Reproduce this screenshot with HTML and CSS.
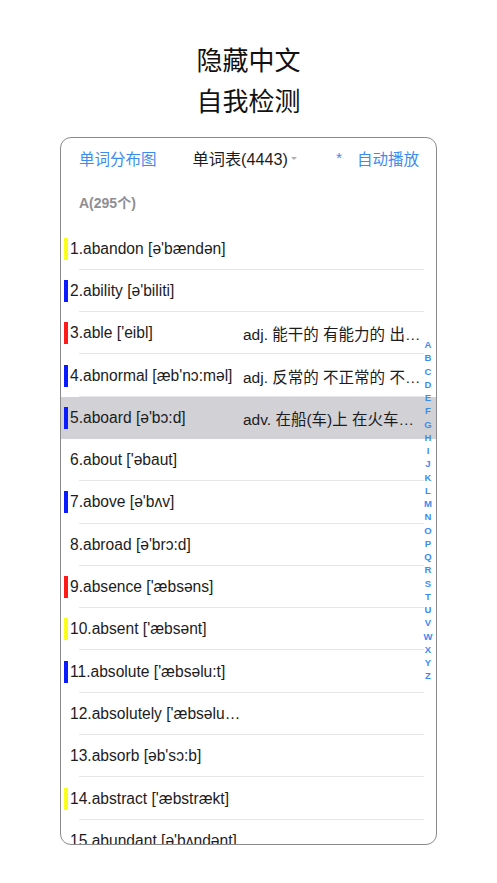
FILE: index.html
```html
<!DOCTYPE html>
<html lang="zh">
<head>
<meta charset="utf-8">
<link rel="stylesheet" href="styles.css">
</head>
<body>
<div class="title">
  <div>隐藏中文</div>
  <div>自我检测</div>
</div>
<div class="frame">
  <div class="topbar">
    <span class="link">单词分布图</span>
    <span class="middle">单词表(4443)<span class="caret"></span></span>
    <span class="right"><span class="star">*</span><span class="link">自动播放</span></span>
  </div>
  <div class="section">A(295个)</div>
  <div class="list">
    <div class="row"><span class="bar yellow"></span><span class="word">1.abandon [ə'bændən]</span><span class="def"></span></div>
    <div class="row"><span class="bar blue"></span><span class="word">2.ability [ə'biliti]</span><span class="def"></span></div>
    <div class="row"><span class="bar red"></span><span class="word">3.able ['eibl]</span><span class="def">adj. 能干的 有能力的 出色的</span></div>
    <div class="row"><span class="bar blue"></span><span class="word">4.abnormal [æb'nɔ:məl]</span><span class="def">adj. 反常的 不正常的 不规则的</span></div>
    <div class="row selected"><span class="bar blue"></span><span class="word">5.aboard [ə'bɔ:d]</span><span class="def">adv. 在船(车)上 在火车上 在飞机上</span></div>
    <div class="row"><span class="bar"></span><span class="word">6.about ['əbaut]</span><span class="def"></span></div>
    <div class="row"><span class="bar blue"></span><span class="word">7.above [ə'bʌv]</span><span class="def"></span></div>
    <div class="row"><span class="bar"></span><span class="word">8.abroad [ə'brɔ:d]</span><span class="def"></span></div>
    <div class="row"><span class="bar red"></span><span class="word">9.absence ['æbsəns]</span><span class="def"></span></div>
    <div class="row"><span class="bar yellow"></span><span class="word">10.absent ['æbsənt]</span><span class="def"></span></div>
    <div class="row"><span class="bar blue"></span><span class="word">11.absolute ['æbsəlu:t]</span><span class="def"></span></div>
    <div class="row"><span class="bar"></span><span class="word">12.absolutely ['æbsəlu:tli]</span><span class="def"></span></div>
    <div class="row"><span class="bar"></span><span class="word">13.absorb [əb'sɔ:b]</span><span class="def"></span></div>
    <div class="row"><span class="bar yellow"></span><span class="word">14.abstract ['æbstrækt]</span><span class="def"></span></div>
    <div class="row"><span class="bar"></span><span class="word">15.abundant [ə'bʌndənt]</span><span class="def"></span></div>
  </div>
  <div class="index">
    <span>A</span><span>B</span><span>C</span><span>D</span><span>E</span><span>F</span><span>G</span><span>H</span><span>I</span><span>J</span><span>K</span><span>L</span><span>M</span><span>N</span><span>O</span><span>P</span><span>Q</span><span>R</span><span>S</span><span>T</span><span>U</span><span>V</span><span>W</span><span>X</span><span>Y</span><span>Z</span>
  </div>
</div>
</body>
</html>
```

FILE: styles.css
```css
html, body {
  margin: 0;
  padding: 0;
  background: #ffffff;
}
body {
  font-family: "Liberation Sans", "Noto Sans CJK SC", sans-serif;
  color: #1c1c1e;
  width: 497px;
}
.title {
  padding-top: 38px;
  text-align: center;
  font-family: "Noto Sans CJK SC", sans-serif;
  font-size: 26px;
  line-height: 41px;
  color: #111;
}
.frame {
  position: relative;
  margin: 17px 0 0 60px;
  width: 375px;
  height: 706px;
  border: 1px solid #8a8a8a;
  border-radius: 11px;
  overflow: hidden;
  background: #fff;
}
.topbar {
  height: 40px;
  display: flex;
  align-items: center;
  padding: 0 17px 0 18px;
  font-size: 15.5px;
}
.link {
  color: #3c8cf0;
}
.middle {
  margin-left: 36px;
  color: #1c1c1e;
  font-size: 16.2px;
  display: flex;
  align-items: center;
}
.caret {
  width: 0;
  height: 0;
  margin-left: 3px;
  border-left: 3px solid transparent;
  border-right: 3px solid transparent;
  border-top: 3px solid #b0b0b0;
}
.right {
  margin-left: auto;
  display: flex;
  align-items: center;
}
.star {
  color: #3c8cf0;
  margin-right: 15px;
}
.section {
  height: 50px;
  line-height: 50px;
  padding-left: 18px;
  font-size: 14px;
  font-weight: bold;
  color: #8e8e93;
}
.list {
  display: flex;
  flex-direction: column;
  margin-top: -0.5px;
}
.row {
  position: relative;
  height: 42.3px;
  display: flex;
  align-items: center;
  font-size: 15.6px;
}
.row::after {
  content: "";
  position: absolute;
  left: 18px;
  right: 12px;
  bottom: 0;
  height: 1px;
  background: #e6e6e8;
}
.row.selected {
  background: #d1d1d6;
}
.row.selected::after {
  display: none;
}
.bar {
  width: 4px;
  height: 22px;
  margin-left: 3px;
  margin-right: 2px;
  flex: none;
}
.bar.yellow { background: #fbff1e; }
.bar.blue { background: #0a1cff; }
.bar.red { background: #ff1a1a; }
.word {
  width: 172px;
  flex: none;
  white-space: nowrap;
  overflow: hidden;
  text-overflow: ellipsis;
}
.def {
  margin-left: 1px;
  width: 178px;
  font-size: 15.5px;
  white-space: nowrap;
  overflow: hidden;
  text-overflow: ellipsis;
}
.index {
  position: absolute;
  right: 0;
  top: 200px;
  width: 16px;
  display: flex;
  flex-direction: column;
  align-items: center;
  font-size: 9.5px;
  font-weight: bold;
  line-height: 13.25px;
  color: #3c8cf0;
}
```
